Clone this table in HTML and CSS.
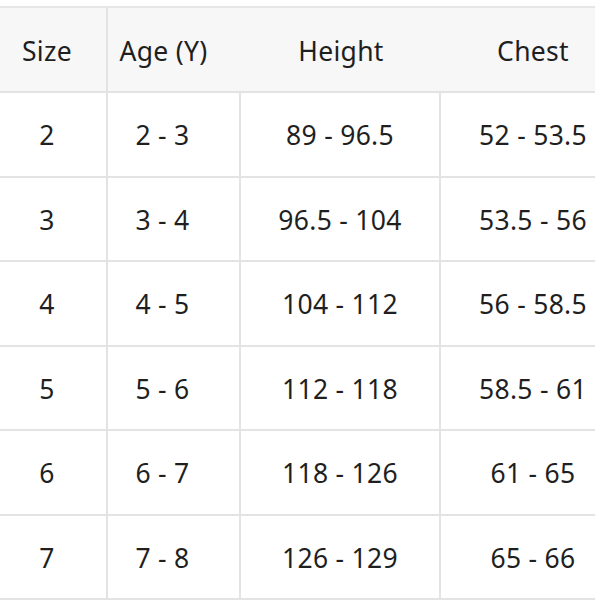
FILE: index.html
```html
<!DOCTYPE html>
<html>
<head>
<meta charset="utf-8">
<link rel="stylesheet" href="styles.css">
</head>
<body>
<div class="wrap">
  <div class="row head">
    <div class="cell c1 div">Size</div>
    <div class="cell c2">Age (Y)</div>
    <div class="cell c3">Height</div>
    <div class="cell c4">Chest</div>
  </div>
  <div class="row">
    <div class="cell c1 div">2</div>
    <div class="cell c2 div">2 - 3</div>
    <div class="cell c3 div">89 - 96.5</div>
    <div class="cell c4">52 - 53.5</div>
  </div>
  <div class="row">
    <div class="cell c1 div">3</div>
    <div class="cell c2 div">3 - 4</div>
    <div class="cell c3 div">96.5 - 104</div>
    <div class="cell c4">53.5 - 56</div>
  </div>
  <div class="row">
    <div class="cell c1 div">4</div>
    <div class="cell c2 div">4 - 5</div>
    <div class="cell c3 div">104 - 112</div>
    <div class="cell c4">56 - 58.5</div>
  </div>
  <div class="row">
    <div class="cell c1 div">5</div>
    <div class="cell c2 div">5 - 6</div>
    <div class="cell c3 div">112 - 118</div>
    <div class="cell c4">58.5 - 61</div>
  </div>
  <div class="row">
    <div class="cell c1 div">6</div>
    <div class="cell c2 div">6 - 7</div>
    <div class="cell c3 div">118 - 126</div>
    <div class="cell c4">61 - 65</div>
  </div>
  <div class="row last">
    <div class="cell c1 div">7</div>
    <div class="cell c2 div">7 - 8</div>
    <div class="cell c3 div">126 - 129</div>
    <div class="cell c4">65 - 66</div>
  </div>
</div>
</body>
</html>
```
FILE: styles.css
```css
html, body {
  margin: 0;
  padding: 0;
  background: #ffffff;
}
body {
  font-family: "Noto Sans", "Liberation Sans", sans-serif;
  color: #1f1f1f;
  font-size: 26.5px;
  letter-spacing: 0.3px;
}
.wrap {
  margin-top: 6px;
  width: 595px;
  overflow: hidden;
  border-top: 2px solid #e6e6e6;
}
.row {
  display: grid;
  grid-template-columns: 108px 133px 200px 184px;
  width: 625px;
  height: 84.5px;
  box-sizing: border-box;
  border-bottom: 2px solid #e3e3e3;
}
.head {
  background: #f7f7f7;
  height: 85px;
}
.cell {
  display: flex;
  align-items: center;
  justify-content: center;
  white-space: nowrap;
  box-sizing: border-box;
  padding-top: 2px;
}
.div {
  border-right: 2px solid #e3e3e3;
}
.c1 {
  padding-right: 12px;
}
.c2 {
  padding-right: 22px;
}
```
